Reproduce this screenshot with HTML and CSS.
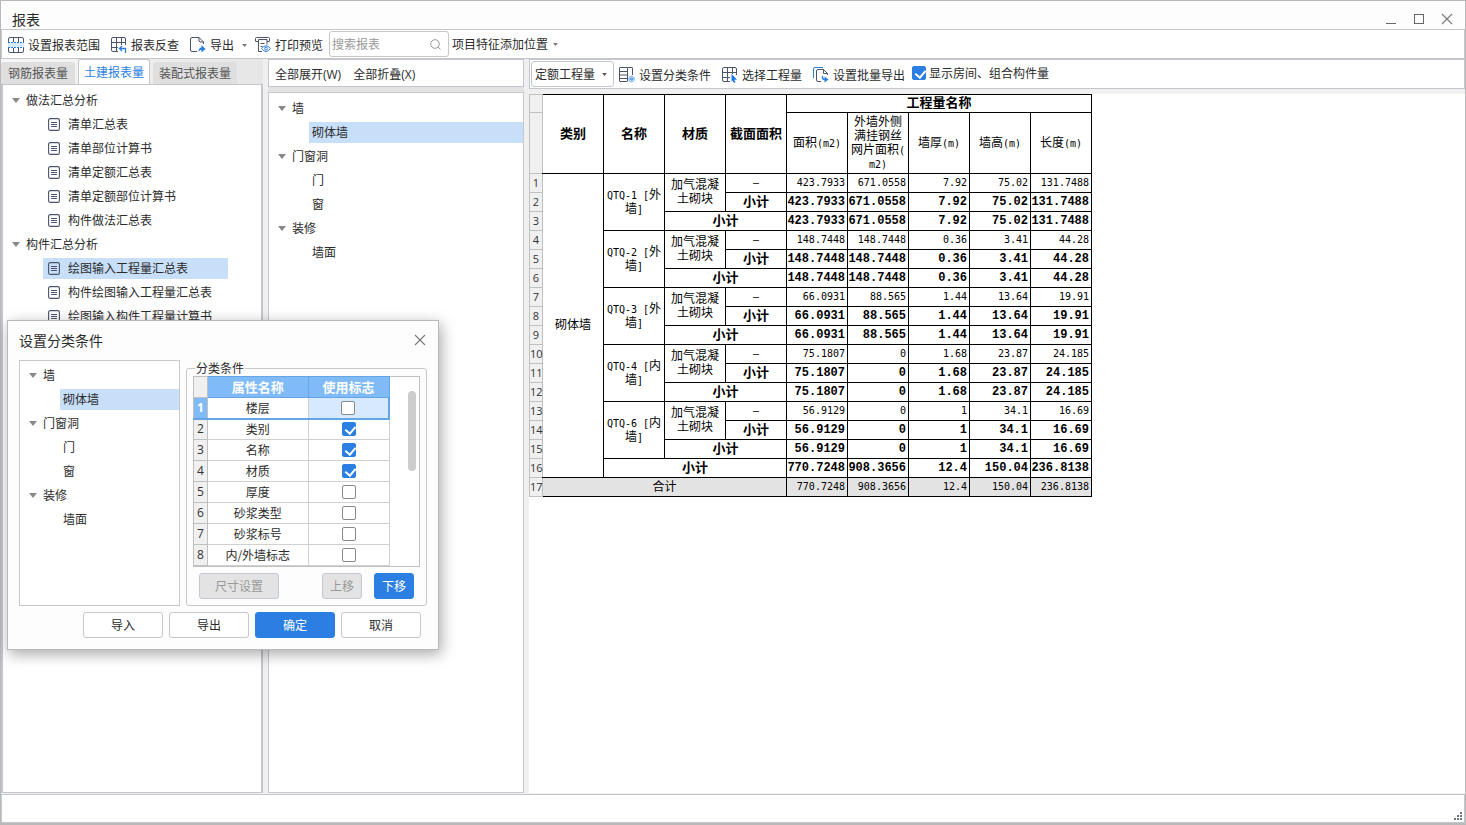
FILE: index.html
```html
<!DOCTYPE html>
<html lang="zh-CN">
<head>
<meta charset="utf-8">
<title>报表</title>
<link rel="stylesheet" href="styles.css">
</head>
<body>
<svg class="sprite" aria-hidden="true">
  <symbol id="doc" viewBox="0 0 12 13"><rect x=".6" y=".6" width="10.8" height="11.8" rx="1.5" fill="none" stroke="currentColor" stroke-width="1.1"/><path d="M3 4.500h6M3 6.500h6M3 8.500h6" stroke="currentColor"/></symbol>
  <symbol id="caret" viewBox="0 0 8 5"><path d="M0 0h8L4 5z" fill="currentColor"/></symbol>
  <symbol id="cross" viewBox="0 0 12 12"><path d="M1 1l10 10M11 1L1 11" stroke="currentColor" stroke-width="1.1"/></symbol>
</svg>
<div class="window">
  <header class="titlebar">
    <h1 class="title">报表</h1>
    <div class="controls">
      <button class="ctl" aria-label="最小化"><svg width="12" height="12"><path d="M1 10.500h10" stroke="#666"/></svg></button>
      <button class="ctl" aria-label="最大化"><svg width="12" height="12"><rect x="1.500" y="1.500" width="9" height="9" fill="none" stroke="#666"/></svg></button>
      <button class="ctl" aria-label="关闭"><svg width="12" height="12"><use href="#cross"/></svg></button>
    </div>
  </header>

  <nav class="toolbar">
    <button class="tool spaced"><svg class="icon" viewBox="0 0 16 16" fill="none" stroke="#4b5468"><path d="M0 5.500h16v5H0z" fill="#d6e9ff" stroke="none"/><path d="M.5 5V2A1.500 1.500 0 0 1 2 .5h12A1.500 1.500 0 0 1 15.500 2v3M.5 11v3A1.500 1.500 0 0 0 2 15.500h12a1.500 1.500 0 0 0 1.500-1.500v-3M5.500.5V5M10.500.5V5M5.500 11v4.500M10.500 11v4.500"/><path d="M0 5.500h16M0 10.500h16" stroke="#2b7fe3" stroke-dasharray="2 1"/></svg>设置报表范围</button>
    <button class="tool spaced"><svg class="icon" viewBox="0 0 16 16" fill="none" stroke="#4b5468"><path d="M7 14.500H2A1.500 1.500 0 0 1 .5 13V2A1.500 1.500 0 0 1 2 .5h11A1.500 1.500 0 0 1 14.500 2v6M.5 5.500h14M.5 10.500H7M5.500.5v14M10.500.5V8"/><path d="M11 9l-2.500 2.500L11 14M9 11.500h5.500V16" stroke="#2b7fe3" stroke-width="1.300"/></svg>报表反查</button>
    <button class="tool"><svg class="icon" viewBox="0 0 16 16" fill="none" stroke="#4b5468"><path d="M7 14.500H2A1.500 1.500 0 0 1 .5 13V2A1.500 1.500 0 0 1 2 .5h7l4.500 4.500v2M9 .5V4l1 1h3.500"/><path d="M8.500 15c0-3 1-4.500 3-4.500V8l4 4-4 3.500v-2.500c-1.300 0-2 .5-3 2z" fill="#2b7fe3" stroke="none"/></svg>导出<svg class="drop split" viewBox="0 0 8 5"><use href="#caret"/></svg></button>
    <button class="tool"><svg class="icon" viewBox="0 0 16 16" fill="none" stroke="#4b5468"><path d="M3 4.500H1A.5.5 0 0 1 .5 4V1.500a1 1 0 0 1 1-1h12a1 1 0 0 1 1 1V4a.5.5 0 0 1-.5.5h-2M3.500 2.500h8.500v5M3.500 2.500v12H7M5.500 6.500h4M5.500 9.500h2"/><path d="M6.500 11.500q4.500-5.500 9 0-4.500 6-9 0z" stroke="#2b7fe3" fill="#fff"/><circle cx="11" cy="11.500" r="1.400" stroke="#2b7fe3"/></svg>打印预览</button>
    <div class="search"><input type="search" aria-label="搜索报表" placeholder="搜索报表"><svg class="lens" viewBox="0 0 11 11" fill="none" stroke="#999"><circle cx="5" cy="5" r="4.300"/><path d="M8 8l2.500 2.500"/></svg></div>
    <button class="tool place">项目特征添加位置<svg class="drop near" viewBox="0 0 8 5"><use href="#caret"/></svg></button>
  </nav>

  <main class="body">
    <section class="left">
      <div class="tabs">
        <button class="tab">钢筋报表量</button>
        <button class="tab active">土建报表量</button>
        <button class="tab">装配式报表量</button>
      </div>
      <ul class="tree reports">
        <li class="branch"><svg class="arrow"><use href="#caret"/></svg>做法汇总分析</li>
        <li class="leaf"><span class="item"><svg class="doc"><use href="#doc"/></svg>清单汇总表</span></li>
        <li class="leaf"><span class="item"><svg class="doc"><use href="#doc"/></svg>清单部位计算书</span></li>
        <li class="leaf"><span class="item"><svg class="doc"><use href="#doc"/></svg>清单定额汇总表</span></li>
        <li class="leaf"><span class="item"><svg class="doc"><use href="#doc"/></svg>清单定额部位计算书</span></li>
        <li class="leaf"><span class="item"><svg class="doc"><use href="#doc"/></svg>构件做法汇总表</span></li>
        <li class="branch"><svg class="arrow"><use href="#caret"/></svg>构件汇总分析</li>
        <li class="leaf"><span class="item selected"><svg class="doc"><use href="#doc"/></svg>绘图输入工程量汇总表</span></li>
        <li class="leaf"><span class="item"><svg class="doc"><use href="#doc"/></svg>构件绘图输入工程量汇总表</span></li>
        <li class="leaf"><span class="item"><svg class="doc"><use href="#doc"/></svg>绘图输入构件工程量计算书</span></li>
      </ul>
    </section>

    <section class="middle">
      <div class="folds"><button class="tool">全部展开(W)</button><button class="tool">全部折叠(X)</button></div>
      <ul class="tree parts">
        <li class="branch"><svg class="arrow"><use href="#caret"/></svg>墙</li>
        <li class="leaf"><span class="item selected">砌体墙</span></li>
        <li class="branch"><svg class="arrow"><use href="#caret"/></svg>门窗洞</li>
        <li class="leaf"><span class="item">门</span></li>
        <li class="leaf"><span class="item">窗</span></li>
        <li class="branch"><svg class="arrow"><use href="#caret"/></svg>装修</li>
        <li class="leaf"><span class="item">墙面</span></li>
      </ul>
    </section>

    <section class="right">
      <div class="options">
        <div class="picker"><select aria-label="工程量类型"><option>定额工程量</option></select><svg class="drop" viewBox="0 0 8 5"><use href="#caret"/></svg></div>
        <button class="tool"><svg class="icon" viewBox="0 0 16 16" fill="none" stroke="#4b5468"><path d="M8 14.500H1A.5.5 0 0 1 .5 14V1A.5.5 0 0 1 1 .5h7.500v14M.5 4.500h8M.5 8h8M.5 11.500h8M8.500.5H13a.5.5 0 0 1 .5.5v7"/><path d="M12.500 9l2.600 1.500v3l-2.600 1.500-2.600-1.500v-3z" fill="#d6e9ff" stroke="#7bb0ee"/><circle cx="12.500" cy="12" r="1" stroke="#2b7fe3"/></svg>设置分类条件</button>
        <button class="tool"><svg class="icon" viewBox="0 0 16 16" fill="none" stroke="#4b5468"><path d="M8 14.500H2A1.500 1.500 0 0 1 .5 13V2A1.500 1.500 0 0 1 2 .5h11A1.500 1.500 0 0 1 14.500 2v6M.5 5.500h14M.5 10.500H8M5.500.5v14M10.500.5V7"/><path d="M9.500 7l5.500 5.500-2.800.3 1.300 2.500-1.500.7-1.300-2.500-1.200 1.500z" fill="#1677f0" stroke="none"/></svg>选择工程量</button>
        <button class="tool"><svg class="icon" viewBox="0 0 16 16" fill="none" stroke="#4b5468"><path d="M.5 11V2A1.500 1.500 0 0 1 2 .5h8" stroke="#2b7fe3"/><path d="M8 14.500H5A1.500 1.500 0 0 1 3.500 13V4A1.500 1.500 0 0 1 5 2.500h5.500l4 4V8M10.500 2.500v4h4"/><path d="M9.500 9v1.500a2 2 0 0 0 2 2H12" stroke="#2b7fe3" stroke-width="1.500"/><path d="M11.500 9.500l4 3-4 3z" fill="#2b7fe3" stroke="none"/></svg>设置批量导出</button>
        <label class="show"><input class="check" type="checkbox" checked>显示房间、组合构件量</label>
      </div>
      <div class="sheet">
        <table class="report">
          <colgroup><col class="index"><col><col><col><col><col><col><col><col><col></colgroup>
          <thead>
            <tr class="top"><td class="no"></td><th class="edge" rowspan="2">类别</th><th rowspan="2">名称</th><th rowspan="2">材质</th><th rowspan="2">截面面积</th><th colspan="5">工程量名称</th></tr>
            <tr class="sub"><td class="no"></td><td>面积<i>(m2)</i></td><td>外墙外侧<br>满挂钢丝<br>网片面积<i>(</i><br><i>m2)</i></td><td>墙厚<i>(m)</i></td><td>墙高<i>(m)</i></td><td>长度<i>(m)</i></td></tr>
          </thead>
          <tbody>
            <tr class="nums"><td class="no">1</td><td class="txt edge" rowspan="16">砌体墙</td><td class="txt" rowspan="3"><i>QTQ-1 [</i>外<br>墙<i>]</i></td><td class="txt" rowspan="2">加气混凝<br>土砌块</td><td class="dash">–</td><td>423.7933</td><td>671.0558</td><td>7.92</td><td>75.02</td><td>131.7488</td></tr>
            <tr class="nums bold"><td class="no">2</td><td class="txt">小计</td><td>423.7933</td><td>671.0558</td><td>7.92</td><td>75.02</td><td>131.7488</td></tr>
            <tr class="nums bold"><td class="no">3</td><td class="txt" colspan="2">小计</td><td>423.7933</td><td>671.0558</td><td>7.92</td><td>75.02</td><td>131.7488</td></tr>
            <tr class="nums"><td class="no">4</td><td class="txt" rowspan="3"><i>QTQ-2 [</i>外<br>墙<i>]</i></td><td class="txt" rowspan="2">加气混凝<br>土砌块</td><td class="dash">–</td><td>148.7448</td><td>148.7448</td><td>0.36</td><td>3.41</td><td>44.28</td></tr>
            <tr class="nums bold"><td class="no">5</td><td class="txt">小计</td><td>148.7448</td><td>148.7448</td><td>0.36</td><td>3.41</td><td>44.28</td></tr>
            <tr class="nums bold"><td class="no">6</td><td class="txt" colspan="2">小计</td><td>148.7448</td><td>148.7448</td><td>0.36</td><td>3.41</td><td>44.28</td></tr>
            <tr class="nums"><td class="no">7</td><td class="txt" rowspan="3"><i>QTQ-3 [</i>外<br>墙<i>]</i></td><td class="txt" rowspan="2">加气混凝<br>土砌块</td><td class="dash">–</td><td>66.0931</td><td>88.565</td><td>1.44</td><td>13.64</td><td>19.91</td></tr>
            <tr class="nums bold"><td class="no">8</td><td class="txt">小计</td><td>66.0931</td><td>88.565</td><td>1.44</td><td>13.64</td><td>19.91</td></tr>
            <tr class="nums bold"><td class="no">9</td><td class="txt" colspan="2">小计</td><td>66.0931</td><td>88.565</td><td>1.44</td><td>13.64</td><td>19.91</td></tr>
            <tr class="nums"><td class="no">10</td><td class="txt" rowspan="3"><i>QTQ-4 [</i>内<br>墙<i>]</i></td><td class="txt" rowspan="2">加气混凝<br>土砌块</td><td class="dash">–</td><td>75.1807</td><td>0</td><td>1.68</td><td>23.87</td><td>24.185</td></tr>
            <tr class="nums bold"><td class="no">11</td><td class="txt">小计</td><td>75.1807</td><td>0</td><td>1.68</td><td>23.87</td><td>24.185</td></tr>
            <tr class="nums bold"><td class="no">12</td><td class="txt" colspan="2">小计</td><td>75.1807</td><td>0</td><td>1.68</td><td>23.87</td><td>24.185</td></tr>
            <tr class="nums"><td class="no">13</td><td class="txt" rowspan="3"><i>QTQ-6 [</i>内<br>墙<i>]</i></td><td class="txt" rowspan="2">加气混凝<br>土砌块</td><td class="dash">–</td><td>56.9129</td><td>0</td><td>1</td><td>34.1</td><td>16.69</td></tr>
            <tr class="nums bold"><td class="no">14</td><td class="txt">小计</td><td>56.9129</td><td>0</td><td>1</td><td>34.1</td><td>16.69</td></tr>
            <tr class="nums bold"><td class="no">15</td><td class="txt" colspan="2">小计</td><td>56.9129</td><td>0</td><td>1</td><td>34.1</td><td>16.69</td></tr>
            <tr class="nums bold"><td class="no">16</td><td class="txt" colspan="3">小计</td><td>770.7248</td><td>908.3656</td><td>12.4</td><td>150.04</td><td>236.8138</td></tr>
            <tr class="nums total"><td class="no">17</td><td class="txt edge" colspan="4">合计</td><td>770.7248</td><td>908.3656</td><td>12.4</td><td>150.04</td><td>236.8138</td></tr>
          </tbody>
        </table>
      </div>
    </section>
  </main>

  <footer class="status"><svg class="grip" viewBox="0 0 8 8" fill="#70757d"><path d="M6 0h2v2H6zM3 3h2v2H3zM6 3h2v2H6zM0 6h2v2H0zM3 6h2v2H3zM6 6h2v2H6z"/></svg></footer>
</div>

<div class="dialog" role="dialog" aria-labelledby="dialog-title">
  <div class="dialog-head"><h2 class="title" id="dialog-title">设置分类条件</h2><button class="ctl" aria-label="关闭"><svg width="12" height="12"><use href="#cross"/></svg></button></div>
  <div class="panes">
    <ul class="tree parts small">
      <li class="branch"><svg class="arrow"><use href="#caret"/></svg>墙</li>
      <li class="leaf"><span class="item selected">砌体墙</span></li>
      <li class="branch"><svg class="arrow"><use href="#caret"/></svg>门窗洞</li>
      <li class="leaf"><span class="item">门</span></li>
      <li class="leaf"><span class="item">窗</span></li>
      <li class="branch"><svg class="arrow"><use href="#caret"/></svg>装修</li>
      <li class="leaf"><span class="item">墙面</span></li>
    </ul>
    <fieldset class="group">
      <legend>分类条件</legend>
      <div class="grid-box">
        <table class="props">
          <colgroup><col class="index"><col><col class="flag"></colgroup>
          <thead><tr><td class="no"></td><th>属性名称</th><th>使用标志</th></tr></thead>
          <tbody>
            <tr class="current"><td class="no">1</td><td>楼层</td><td><input class="check" type="checkbox" aria-label="楼层"></td></tr>
            <tr><td class="no">2</td><td>类别</td><td><input class="check" type="checkbox" aria-label="类别" checked></td></tr>
            <tr><td class="no">3</td><td>名称</td><td><input class="check" type="checkbox" aria-label="名称" checked></td></tr>
            <tr><td class="no">4</td><td>材质</td><td><input class="check" type="checkbox" aria-label="材质" checked></td></tr>
            <tr><td class="no">5</td><td>厚度</td><td><input class="check" type="checkbox" aria-label="厚度"></td></tr>
            <tr><td class="no">6</td><td>砂浆类型</td><td><input class="check" type="checkbox" aria-label="砂浆类型"></td></tr>
            <tr><td class="no">7</td><td>砂浆标号</td><td><input class="check" type="checkbox" aria-label="砂浆标号"></td></tr>
            <tr><td class="no">8</td><td>内/外墙标志</td><td><input class="check" type="checkbox" aria-label="内/外墙标志"></td></tr>
          </tbody>
        </table>
        <div class="thumb"></div>
      </div>
      <div class="moves"><button class="btn size" disabled>尺寸设置</button><button class="btn short" disabled>上移</button><button class="btn short primary">下移</button></div>
    </fieldset>
  </div>
  <div class="actions"><button class="btn">导入</button><button class="btn">导出</button><button class="btn primary">确定</button><button class="btn">取消</button></div>
</div>
</body>
</html>
```

FILE: styles.css
```css
* { box-sizing: border-box; }
body {
  margin: 0;
  color: #2b2b2b;
  font: 12px/20px "Noto Sans CJK SC", sans-serif;
}
button, input, select { font: inherit; color: inherit; }
button { padding: 0; border: 0; background: none; }
ul { margin: 0; padding: 0; list-style: none; }
i { font-style: normal; }
.sprite { position: absolute; width: 0; height: 0; }

.window {
  display: flex;
  flex-direction: column;
  min-height: 100vh;
  border: 1px solid #b9b9b9;
  border-bottom-width: 2px;
  background: #f0f0f0;
}
.titlebar {
  display: flex;
  justify-content: space-between;
  align-items: flex-end;
  height: 28px;
  padding: 0 12px 0 11px;
  background: #fdfdfd;
}
.title { margin: 0; font-size: 14px; font-weight: 400; line-height: 20px; }
.controls { display: flex; gap: 16px; padding-bottom: 4px; }
.ctl { display: flex; color: #777; }

.toolbar, .options {
  display: flex;
  align-items: center;
  gap: 6px;
  border: 1px solid #c3c6cc;
  background: #fff;
}
.toolbar { height: 30px; padding-left: 6px; }
.tool { display: flex; align-items: center; gap: 4px; padding-top: 2px; white-space: nowrap; }
.spaced { margin-right: 5px; }
.place { margin-left: -3px; padding-top: 0; }
.icon { width: 16px; height: 16px; }
.drop { width: 5px; height: 3px; margin-left: 4px; color: #777; }
.split { margin-right: 2px; }
.near { margin-left: 1px; }
.search { display: flex; align-items: center; width: 120px; height: 26px; padding: 0 7px 0 2px; border: 1px solid #c8c8c8; border-radius: 3px; }
.search input { flex: 1; min-width: 0; padding: 0; border: 0; outline: 0; background: none; }
.search input::placeholder { color: #999; }
.lens { width: 11px; height: 11px; }

.body {
  display: grid;
  grid-template-columns: 262px 256px 1fr;
  column-gap: 5px;
  flex: 1;
  padding-bottom: 1px;
}
.left, .middle, .right { display: flex; flex-direction: column; min-width: 0; }
.tabs { display: flex; align-items: flex-end; gap: 3px; height: 25px; background: linear-gradient(90deg, #f7f7f7, #e6e6e6); }
.tab { height: 22px; padding: 0 6px; border-radius: 3px 3px 0 0; background: #dfdfdf; color: #555; }
.tab.active { height: 25px; border: 1px solid #c3c6cc; border-bottom: 0; border-radius: 3px 3px 0 0; padding: 0 5px; background: #fff; color: #2b7fe3; }
.tab:first-child { width: 74px; }
.tree { flex: 1; background: #fff; }
.reports { border: solid #c3c6cc; border-width: 1px 2px; padding-top: 3px; }
.branch { display: flex; align-items: center; gap: 6px; height: 24px; padding-left: 9px; }
.leaf { display: flex; align-items: center; height: 24px; padding-left: 40px; }
.arrow { width: 8px; height: 5px; color: #888; }
.item { flex: 1; display: flex; align-items: center; gap: 8px; height: 21px; padding-left: 3px; white-space: nowrap; }
.reports .item { flex: 0 0 185px; padding-left: 5px; }
.selected { background: #c7dff9; }
.doc { width: 12px; height: 13px; color: #4b5468; }
.folds { display: flex; gap: 12px; height: 28px; padding: 0 6px; border: 1px solid #c3c6cc; background: #fff; font-family: "Open Sans", "Noto Sans CJK SC", sans-serif; }
.folds .tool { padding-top: 4px; }
.middle { background: #e3e3e3; }
.middle .tree { margin-top: 5px; border: 1px solid #c8c8cc; padding-top: 3px; }

.options { height: 30px; gap: 9px; padding-left: 1px; }
.picker { display: flex; align-items: center; width: 83px; height: 26px; margin-right: -4px; padding: 0 6px 0 3px; border: 1px solid #c3c6cc; border-radius: 3px; }
.picker select { appearance: none; flex: 1; min-width: 0; padding: 0; border: 0; background: none; outline: 0; }
.picker .drop { margin: 0; color: #555; }
.options .tool { margin-right: 2px; }
.show { display: flex; align-items: center; gap: 3px; margin-left: -4px; padding-bottom: 2px; white-space: nowrap; }
.check {
  appearance: none;
  position: relative;
  width: 14px;
  height: 14px;
  margin: 0;
  border: 1px solid #888;
  border-radius: 2px;
  background: #fff;
}
.check:checked { border-color: #2b7fe3; background: #2b7fe3; }
.check:checked::after {
  content: "";
  position: absolute;
  left: 4px;
  top: 1px;
  width: 5px;
  height: 8px;
  border: solid #fff;
  border-width: 0 2px 2px 0;
  transform: rotate(40deg);
}
.sheet { flex: 1; margin-top: 5px; background: #fff; }

.report, .props { table-layout: fixed; border-collapse: collapse; }
.report { width: 563px; color: #000; line-height: 14px; }
.report col { width: 61px; }
.report .index { width: 13px; }
.report th, .report td { padding: 0; border: 1px solid #000; text-align: center; }
.report th { padding-bottom: 3px; font-size: 13px; }
.report .top { height: 18px; }
.report .sub { height: 61px; }
.report .sub td { padding-bottom: 3px; }
.report .nums { height: 19px; }
.report i { font-family: "DejaVu Sans Mono", monospace; font-size: 10px; line-height: 10px; }
.report .nums td { padding-right: 2px; font: 10px/14px "DejaVu Sans Mono", monospace; text-align: right; }
.report .bold td { font: bold 12px/14px "Liberation Mono", monospace; }
.report .nums .txt { padding: 0 0 3px; font: 12px/14px "Noto Sans CJK SC", sans-serif; text-align: center; }
.report .bold .txt { font-size: 13px; font-weight: 700; }
.report .nums .dash { padding: 0; text-align: center; }
.report .total td { background: #e3e3e3; }
.report .edge { border-left-color: #c0c0c0; }
.report .no, .report .nums .no, .props .no {
  padding: 0;
  border: 1px solid #c0c0c0;
  background: #f0f0f0;
  color: #333;
  font: 12px/16px "Open Sans", sans-serif;
  text-align: center;
}
.report .nums .no { font-size: 11px; }

.status { display: flex; justify-content: flex-end; align-items: flex-end; height: 29px; padding: 2px; border: 1px solid #c3c6cc; background: #fff; }
.grip { width: 8px; height: 8px; }

.dialog {
  position: absolute;
  left: 7px;
  top: 320px;
  width: 432px;
  padding: 0 11px 11px;
  border: 1px solid #b9b9b9;
  background: #fdfdfd;
  box-shadow: 2px 4px 14px rgba(0, 0, 0, .35);
}
.dialog-head { display: flex; justify-content: space-between; align-items: center; height: 39px; padding: 0 1px 2px 0; }
.panes { display: grid; grid-template-columns: 161px 1fr; gap: 6px; }
.small { border: 1px solid #c8c8c8; padding-top: 2px; }
.group { min-width: 0; margin: 0; padding: 0 6px 6px; border: 1px solid #c8c8c8; border-radius: 3px; }
.group legend { margin-left: 2px; padding: 0 1px; line-height: 16px; }
.grid-box { display: flex; justify-content: space-between; padding-bottom: 1px; border: 1px solid #c0c0c0; background: #fff; }
.props { width: 197px; margin: -1px; line-height: 16px; }
.props .index { width: 14px; }
.props .flag { width: 81px; }
.props tr { height: 21px; }
.props th, .props td { padding: 0; border: 1px solid #d0d0d0; text-align: center; }
.props th { border-color: #64a5e8; background: #80bbf8; color: #fff; font-size: 13px; }
.props .check { display: block; margin: 0 auto; }
.props .current td { border-bottom: 2px solid #64a5e8; }
.props .current td:last-child { border-right: 2px solid #64a5e8; background: #d6e9fd; }
.props .current .no { background: #80bbf8; color: #fff; font-weight: 700; }
.thumb { width: 8px; height: 80px; margin: 14px 3px 0 0; border-radius: 4px; background: #cdcdcd; }
.moves { display: flex; gap: 12px; padding: 6px 6px 0; }
.btn { width: 80px; height: 26px; border: 1px solid #c8c8c8; border-radius: 3px; background: #fff; }
.btn:disabled { border-color: #c3c8d4; background: #e3e3e3; color: #999; }
.size { margin-right: auto; }
.short { width: 40px; }
.btn.primary { border-color: #2b7fe3; background: #2b7fe3; color: #fff; }
.actions { display: flex; justify-content: flex-end; gap: 6px; padding: 6px 6px 0; }
```
